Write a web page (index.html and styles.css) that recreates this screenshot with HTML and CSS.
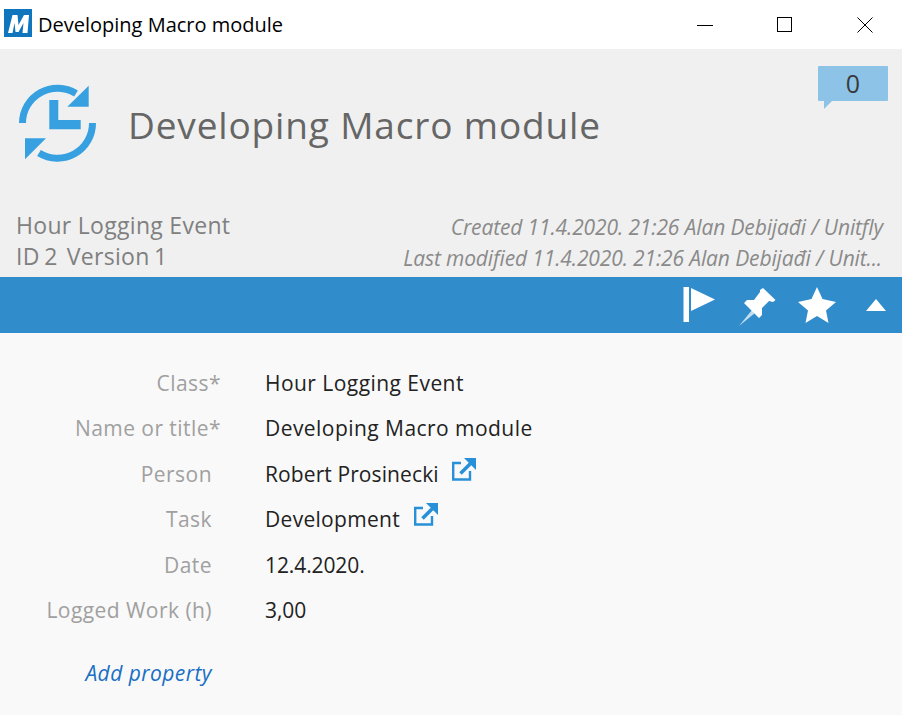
FILE: index.html
```html
<!DOCTYPE html>
<html lang="en">
<head>
<meta charset="utf-8">
<title>Developing Macro module</title>
<link rel="stylesheet" href="styles.css">
</head>
<body>
<div class="titlebar">
  <svg class="app-logo" width="28" height="28" viewBox="0 0 28 28"><rect width="28" height="28" fill="#0f75bc"/><path d="M4 24 L8.500 6 H13.500 L14.500 16 L20 6 H25 L23.500 24 H18.500 L19.500 14 L14.500 23 H11.500 L10.500 14 L8.500 24 Z" fill="#fff"/></svg>
  <span class="window-title">Developing Macro module</span>
  <div class="win-controls">
    <svg class="win-btn" width="16" height="16" viewBox="0 0 16 16"><path d="M0 8.500H16" stroke="#000" stroke-width="1" fill="none"/></svg>
    <svg class="win-btn" width="16" height="16" viewBox="0 0 16 16"><rect x="0.500" y="0.500" width="14" height="14" stroke="#000" stroke-width="1" fill="none"/></svg>
    <svg class="win-btn" width="16" height="16" viewBox="0 0 16 16"><path d="M0.500 0.500L15.500 15.500M15.500 0.500L0.500 15.500" stroke="#000" stroke-width="1" fill="none"/></svg>
  </div>
</div>
<header class="header">
  <div class="head-top">
    <svg class="type-icon" width="80" height="80" viewBox="0 0 80 80" fill="none">
      <path d="M5.500 39 A 35 35 0 0 1 59 9.500" stroke="#36a0e0" stroke-width="7"/>
      <path d="M71.700 1.700 V22.700 H50.300 Z" fill="#36a0e0"/>
      <path d="M75.500 39 A 35 35 0 0 1 22 69" stroke="#36a0e0" stroke-width="7"/>
      <path d="M8 54.300 H29 L8 75.300 Z" fill="#36a0e0"/>
      <path d="M32.300 16 H41.300 V36 H63.700 V45.300 H32.300 Z" fill="#36a0e0"/>
    </svg>
    <h1 class="obj-title">Developing Macro module</h1>
    <div class="badge">0
      <svg class="badge-tail" width="8" height="8" viewBox="0 0 8 8"><path d="M0 0H8L0 8Z" fill="#8cc3e6"/></svg>
    </div>
  </div>
  <div class="head-meta">
    <div class="meta-left">
      <div>Hour Logging Event</div>
      <div class="id-line">ID 2&nbsp; Version 1</div>
    </div>
    <div class="meta-right">
      <div>Created 11.4.2020. 21:26 Alan Debijađi / Unitfly</div>
      <div class="meta-second">Last modified 11.4.2020. 21:26 Alan Debijađi / Unit...</div>
    </div>
  </div>
</header>
<div class="toolbar">
  <svg class="tool flag" width="34" height="38" viewBox="0 0 34 38"><rect x="0.500" y="1" width="5.500" height="35" fill="#fff"/><path d="M8 2L32 13.500L8 25Z" fill="#fff"/></svg>
  <svg class="tool pin" width="40" height="40" viewBox="0 0 40 40"><path d="M25 1L37.500 13L35 15L31 14L24 21L24 28L21 31L6 16L9 13L16 13L22 5L22 3Z" fill="#fff"/><path d="M14 23L17 26L1 39Z" fill="#fff" opacity="0.700"/></svg>
  <svg class="tool" width="40" height="38" viewBox="0 0 40 38"><path d="M20 1L25.500 13L39 16L29 24.500L31.500 37L20 30L8.500 37L11 24.500L1 16L14.500 13Z" fill="#fff"/></svg>
  <svg class="tool caret" width="20" height="12" viewBox="0 0 20 12"><path d="M10 0L20 12H0Z" fill="#fff"/></svg>
</div>
<main class="props">
  <div class="prop"><div class="label wide">Class*</div><div class="value">Hour Logging Event</div></div>
  <div class="prop"><div class="label wide">Name or title*</div><div class="value">Developing Macro module</div></div>
  <div class="prop"><div class="label">Person</div><div class="value person">Robert Prosinecki
    <svg class="ext" width="24" height="24" viewBox="0 0 24 24" fill="none"><path d="M9 6H1.200V22.500H18V14" stroke="#2790d8" stroke-width="2.400"/><path d="M12 1H24V13Z" fill="#2790d8"/><path d="M19 6L8.500 16.500" stroke="#2790d8" stroke-width="3.600"/></svg></div></div>
  <div class="prop"><div class="label">Task</div><div class="value task">Development
    <svg class="ext" width="24" height="24" viewBox="0 0 24 24" fill="none"><path d="M9 6H1.200V22.500H18V14" stroke="#2790d8" stroke-width="2.400"/><path d="M12 1H24V13Z" fill="#2790d8"/><path d="M19 6L8.500 16.500" stroke="#2790d8" stroke-width="3.600"/></svg></div></div>
  <div class="prop"><div class="label">Date</div><div class="value num">12.4.2020.</div></div>
  <div class="prop"><div class="label">Logged Work (h)</div><div class="value num">3,00</div></div>
  <div class="add-row"><a class="add-link" href="#">Add property</a></div>
</main>
</body>
</html>
```
FILE: styles.css
```css
* { box-sizing: border-box; }
html, body { margin: 0; height: 100%; overflow: hidden; }
body { width: 902px; height: 715px; background: #f9f9f9; font-family: "Open Sans", "Noto Sans", sans-serif; display: flex; flex-direction: column; }
.titlebar { height: 49px; background: #fff; display: flex; align-items: center; padding-left: 4px; flex: none; }
.app-logo { flex: none; margin-top: -3px; }
.window-title { margin-left: 6px; font-size: 20px; color: #000; white-space: nowrap; }
.win-controls { margin-left: auto; display: flex; gap: 64px; padding-right: 29px; align-items: center; }
.win-btn { display: block; }
.header { height: 228px; background: #f0f0f0; flex: none; display: flex; flex-direction: column; }
.head-top { height: 160px; position: relative; display: flex; align-items: flex-start; padding: 35px 0 0 17px; }
.type-icon { flex: none; width: 80px; height: 80px; }
.obj-title { margin: 14px 0 0 31px; font-weight: 400; font-size: 37px; line-height: 54px; color: #666; white-space: nowrap; letter-spacing: 0.85px; }
.badge { position: absolute; top: 17px; left: 818px; width: 70px; height: 35px; background: #8cc3e6; color: #3a3a3a; font-size: 25px; font-weight: 500; line-height: 35px; text-align: center; border-radius: 1px; }
.badge-tail { position: absolute; left: 6px; top: 35px; display: block; }
.head-meta { display: flex; justify-content: space-between; padding: 1px 19px 0 16px; }
.meta-left { font-size: 23px; line-height: 31px; color: #808080; letter-spacing: 0.3px; }
.id-line { word-spacing: -1.750px; }
.meta-right { padding-top: 2px; font-size: 21px; line-height: 31px; font-style: italic; color: #8a8a8a; text-align: right; letter-spacing: -0.13px; white-space: nowrap; }
.meta-second { margin-right: 1px; }
.toolbar { height: 56px; background: #318ccc; flex: none; display: flex; align-items: center; justify-content: flex-end; padding-right: 16px; gap: 20px; }
.tool { display: block; flex: none; }
.flag { margin-right: 1px; }
.pin { margin-right: -1px; margin-top: 4px; }
.caret { margin-left: 9px; margin-top: -1px; }
.props { flex: 1; padding-top: 27px; }
.prop { display: flex; height: 45.400px; font-size: 21px; line-height: 46px; letter-spacing: 0.45px; }
.label { width: 212px; text-align: right; color: #a0a0a0; flex: none; letter-spacing: 0.45px; }
.label.wide { width: 221px; }
.wide + .value { margin-left: 44px; }
.value { margin-left: 53px; color: #222; white-space: nowrap; position: relative; }
.value.person { letter-spacing: 0.1px; }
.value.task { letter-spacing: 0.3px; }
.value.num { letter-spacing: -0.1px; }
.ext { display: inline-block; vertical-align: top; margin: 6px 0 0 8px; }
.add-row { width: 212px; text-align: right; padding-top: 18px; }
.add-link { font-size: 21px; line-height: 46px; font-style: italic; color: #1a6fc4; text-decoration: none; letter-spacing: 0.45px; }
```
